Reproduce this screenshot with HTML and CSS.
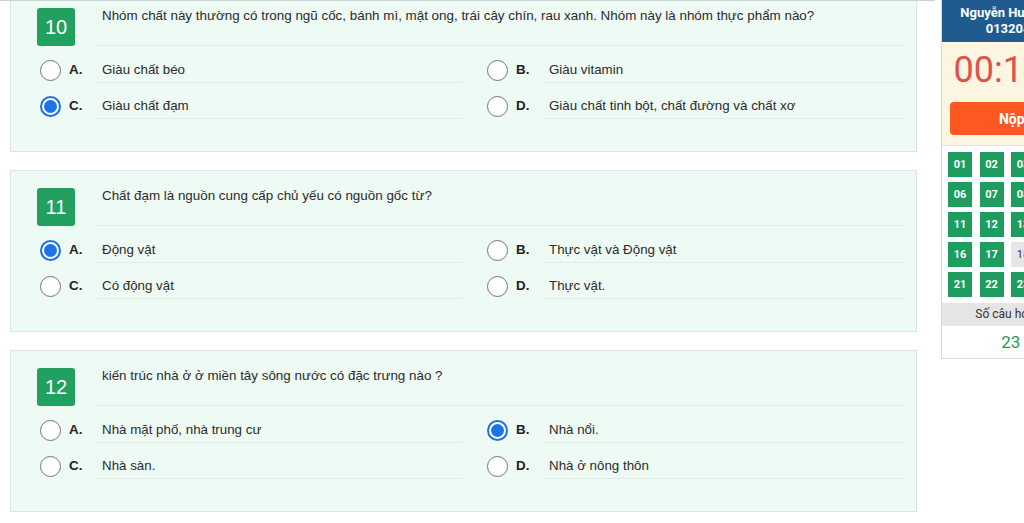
FILE: index.html
```html
<!DOCTYPE html>
<html lang="vi">
<head>
<meta charset="utf-8">
<title>Bài thi</title>
<link rel="stylesheet" href="styles.css">
</head>
<body>
<div class="topline"></div>
<div class="page">
  <main class="questions">
    <section class="card">
      <div class="q-head">
        <div class="badge">10</div>
        <div class="q-text">Nhóm chất này thường có trong ngũ cốc, bánh mì, mật ong, trái cây chín, rau xanh. Nhóm này là nhóm thực phẩm nào?</div>
      </div>
      <div class="options">
        <div class="opt"><span class="radio"></span><span class="letter">A.</span><span class="opt-text">Giàu chất béo</span></div>
        <div class="opt"><span class="radio"></span><span class="letter">B.</span><span class="opt-text">Giàu vitamin</span></div>
        <div class="opt"><span class="radio checked"></span><span class="letter">C.</span><span class="opt-text">Giàu chất đạm</span></div>
        <div class="opt"><span class="radio"></span><span class="letter">D.</span><span class="opt-text">Giàu chất tinh bột, chất đường và chất xơ</span></div>
      </div>
    </section>

    <section class="card">
      <div class="q-head">
        <div class="badge">11</div>
        <div class="q-text">Chất đạm là nguồn cung cấp chủ yếu có nguồn gốc từ?</div>
      </div>
      <div class="options">
        <div class="opt"><span class="radio checked"></span><span class="letter">A.</span><span class="opt-text">Động vật</span></div>
        <div class="opt"><span class="radio"></span><span class="letter">B.</span><span class="opt-text">Thực vật và Động vật</span></div>
        <div class="opt"><span class="radio"></span><span class="letter">C.</span><span class="opt-text">Có động vật</span></div>
        <div class="opt"><span class="radio"></span><span class="letter">D.</span><span class="opt-text">Thực vật.</span></div>
      </div>
    </section>

    <section class="card">
      <div class="q-head">
        <div class="badge">12</div>
        <div class="q-text">kiến trúc nhà ở ở miền tây sông nước có đặc trưng nào ?</div>
      </div>
      <div class="options">
        <div class="opt"><span class="radio"></span><span class="letter">A.</span><span class="opt-text">Nhà mặt phố, nhà trung cư</span></div>
        <div class="opt"><span class="radio checked"></span><span class="letter">B.</span><span class="opt-text">Nhà nổi.</span></div>
        <div class="opt"><span class="radio"></span><span class="letter">C.</span><span class="opt-text">Nhà sàn.</span></div>
        <div class="opt"><span class="radio"></span><span class="letter">D.</span><span class="opt-text">Nhà ở nông thôn</span></div>
      </div>
    </section>
  </main>

  <aside class="panel">
    <div class="panel-head">
      <div class="name">Nguyễn Huỳnh Thắng</div>
      <div class="sid">0132045678</div>
    </div>
    <div class="timer-box">
      <div class="timer">00:14:52</div>
      <button class="submit">Nộp bài</button>
    </div>
    <div class="grid">
      <span class="num">01</span><span class="num">02</span><span class="num">03</span><span class="num">04</span><span class="num">05</span>
      <span class="num">06</span><span class="num">07</span><span class="num">08</span><span class="num">09</span><span class="num">10</span>
      <span class="num">11</span><span class="num">12</span><span class="num">13</span><span class="num">14</span><span class="num">15</span>
      <span class="num">16</span><span class="num">17</span><span class="num empty">18</span><span class="num">19</span><span class="num empty">20</span>
      <span class="num">21</span><span class="num">22</span><span class="num">23</span><span class="num">24</span><span class="num">25</span>
    </div>
    <div class="count-label">Số câu hỏi đã làm</div>
    <div class="count">23 / 25</div>
  </aside>
</div>
</body>
</html>
```

FILE: styles.css
```css
* { box-sizing: border-box; }

html, body {
  margin: 0;
  padding: 0;
  background: #ffffff;
}

body {
  width: 1024px;
  height: 523px;
  overflow: hidden;
  font-family: "Liberation Sans", Arial, sans-serif;
  color: #333333;
}

.topline {
  position: fixed;
  top: 0;
  left: 0;
  width: 935px;
  height: 1px;
  background: #c9d4d9;
  z-index: 2;
}

.page {
  display: flex;
  align-items: flex-start;
  gap: 24px;
  padding-left: 10px;
  width: 1200px;
}

.questions {
  width: 907px;
  flex-shrink: 0;
  margin-top: -10px;
  display: flex;
  flex-direction: column;
  gap: 18px;
}

.card {
  background: #eefaf4;
  border: 1px solid #dbe4df;
  padding: 17px 11px 32px 26px;
}

.q-head {
  display: flex;
  align-items: stretch;
}

.badge {
  width: 38px;
  height: 38px;
  flex-shrink: 0;
  margin-right: 20px;
  background: #21a060;
  border-radius: 3px;
  color: #ffffff;
  font-size: 20px;
  line-height: 38px;
  text-align: center;
}

.q-text {
  flex: 1;
  height: 38px;
  padding-left: 7px;
  font-size: 13.4px;
  line-height: 16px;
  color: #2b2b2b;
  border-bottom: 1px solid #dfede6;
}

.options {
  display: grid;
  grid-template-columns: 423px 1fr;
  column-gap: 24px;
  padding-left: 3px;
  margin-top: 1px;
}

.opt {
  display: flex;
  align-items: flex-end;
  height: 36px;
}

.radio {
  width: 21px;
  height: 21px;
  flex-shrink: 0;
  margin-right: 8px;
  margin-bottom: 2.5px;
  border-radius: 50%;
  border: 1.5px solid #747474;
  background: #ffffff;
  position: relative;
}

.radio.checked {
  border: 2px solid #1d6fe3;
}

.radio.checked::after {
  content: "";
  position: absolute;
  left: 2px;
  top: 2px;
  width: 13px;
  height: 13px;
  border-radius: 50%;
  background: #1a73e8;
}

.letter {
  width: 26px;
  flex-shrink: 0;
  font-weight: bold;
  font-size: 13.33px;
  line-height: 18px;
  color: #222222;
  padding-bottom: 4px;
}

.opt-text {
  flex: 1;
  height: 36px;
  padding: 14px 0 0 7px;
  font-size: 13.33px;
  line-height: 18px;
  color: #2b2b2b;
  border-bottom: 1px solid #dfede6;
}

/* Right panel */
.panel {
  width: 164px;
  flex-shrink: 0;
  background: #ffffff;
  border: 1px solid #dadada;
  border-top: none;
  font-family: Roboto, "Liberation Sans", sans-serif;
}

.panel-head {
  background: #1f5b8f;
  color: #ffffff;
  text-align: center;
  font-weight: bold;
  font-size: 13px;
  line-height: 16px;
  padding: 5px 4px 5px;
  height: 42px;
}

.timer-box {
  background: #fcf5e2;
  padding: 6px 8px 10px;
  border-bottom: 1px solid #f3e1d8;
}

.timer {
  text-align: center;
  color: #df524b;
  font-size: 36px;
  line-height: 44px;
}

.submit {
  display: block;
  width: 100%;
  height: 33px;
  margin-top: 10px;
  border: none;
  border-radius: 4px;
  background: #fc5820;
  color: #ffffff;
  font-family: Roboto, "Liberation Sans", sans-serif;
  font-weight: bold;
  font-size: 14px;
}

.grid {
  display: grid;
  grid-template-columns: repeat(5, 24px);
  column-gap: 7.5px;
  row-gap: 5px;
  padding: 6px;
}

.num {
  height: 25px;
  background: #1f9d5f;
  color: #ffffff;
  font-weight: bold;
  font-size: 11px;
  line-height: 25px;
  text-align: center;
}

.num.empty {
  background: #e6e6e6;
  color: #333333;
  font-weight: normal;
}

.count-label {
  background: #e5e5e5;
  height: 23px;
  line-height: 23px;
  text-align: center;
  font-size: 12px;
  color: #333333;
}

.count {
  height: 32px;
  line-height: 32px;
  text-align: center;
  padding-left: 10px;
  font-size: 17px;
  color: #239a58;
}
```
